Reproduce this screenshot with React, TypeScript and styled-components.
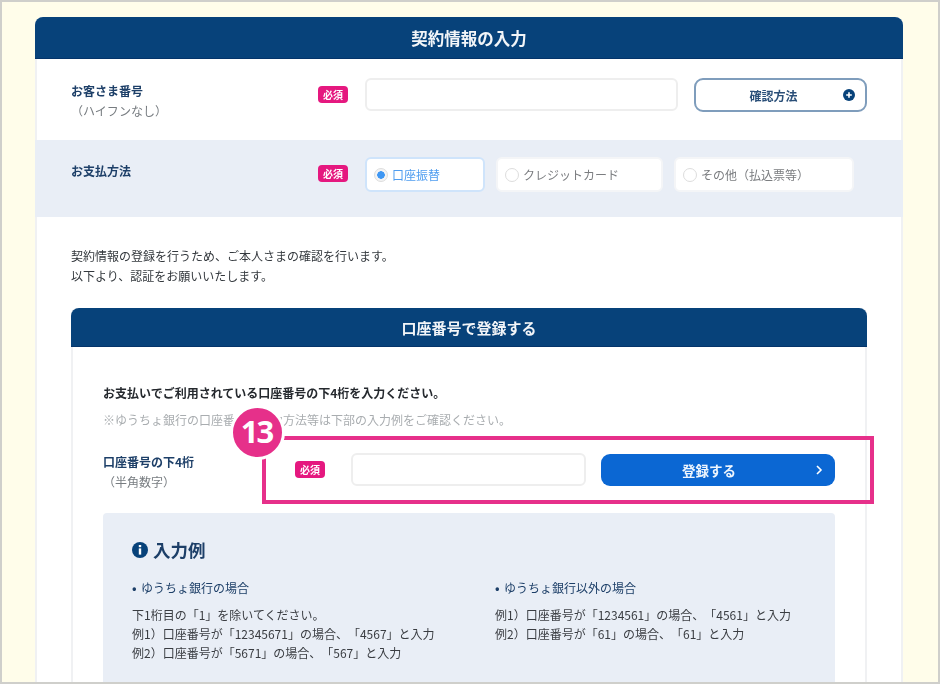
import React from 'react';
import styled, { createGlobalStyle } from 'styled-components';

const GlobalStyle = createGlobalStyle`
  html, body {
    margin: 0;
    padding: 0;
    background: #fffdea;
  }
  body {
    font-family: "Noto Sans CJK JP", "Noto Sans", sans-serif;
    text-spacing-trim: space-all;
  }
`;

const Frame = styled.div`
  position: relative;
  box-sizing: border-box;
  width: 940px;
  height: 684px;
  padding: 15px 35px 0 33px;
  border: 2px solid #cfcfcb;
  background: #fffdea;
  overflow: hidden;
`;

const Card = styled.section`
  background: #fff;
  border-radius: 8px 8px 0 0;
  height: 700px;
  box-shadow: inset 2px 0 0 #f0f1f3, inset -2px 0 0 #f0f1f3;
  filter: blur(0.45px);
`;

const CardHeader = styled.h2<{ $height: number; $size: number }>`
  margin: 0;
  height: ${p => p.$height}px;
  line-height: ${p => p.$height}px;
  background: #07427a;
  border-bottom: 1px solid #04346a;
  box-sizing: border-box;
  border-radius: 8px 8px 0 0;
  color: #f2f5f8;
  font-size: ${p => p.$size}px;
  font-weight: 700;
  text-align: center;
`;

const FormRow = styled.div<{ $height: number; $tinted?: boolean }>`
  box-sizing: border-box;
  height: ${p => p.$height}px;
  display: flex;
  align-items: flex-start;
  padding: ${p => (p.$tinted ? 17 : 19)}px 36px 0;
  background: ${p => (p.$tinted ? '#e9eef6' : 'transparent')};
`;

const LabelBlock = styled.div<{ $width: number; $top: number }>`
  width: ${p => p.$width}px;
  flex: none;
  margin-top: ${p => p.$top}px;
`;

const Label = styled.div`
  color: #1d3f68;
  font-size: 12px;
  font-weight: 700;
  line-height: 20px;
`;

const SubLabel = styled.div`
  color: #777c80;
  font-size: 12px;
  line-height: 20px;
`;

const Badge = styled.span`
  flex: none;
  width: 30px;
  height: 17px;
  margin-top: 8px;
  border-radius: 4px;
  background: #e5187f;
  color: #fff;
  font-size: 10px;
  font-weight: 700;
  line-height: 17px;
  text-align: center;
`;

const TextInput = styled.div<{ $width: number; $gap: number }>`
  box-sizing: border-box;
  flex: none;
  width: ${p => p.$width}px;
  height: 33px;
  margin-left: ${p => p.$gap}px;
  background: #fff;
  border: 2px solid #eeeeee;
  border-radius: 6px;
`;

const OutlineButton = styled.button`
  position: relative;
  box-sizing: border-box;
  flex: none;
  width: 173px;
  height: 34px;
  margin-left: 16px;
  padding: 0 14px 0 0;
  background: #fff;
  border: 2px solid #7f9dbc;
  border-radius: 9px;
  color: #2a4f78;
  font-family: inherit;
  font-size: 12px;
  font-weight: 700;
  svg {
    position: absolute;
    right: 10px;
    top: 9px;
  }
`;

const RadioGroup = styled.div`
  display: flex;
  gap: 11px;
  margin-left: 17px;
`;

const RadioOption = styled.div<{ $width: number; $active?: boolean }>`
  box-sizing: border-box;
  width: ${p => p.$width}px;
  height: 35px;
  display: flex;
  align-items: center;
  gap: 4px;
  padding-left: 7px;
  background: #fff;
  border: 2px solid ${p => (p.$active ? '#cfe4fb' : '#f4f5f7')};
  border-radius: 6px;
  color: ${p => (p.$active ? '#4f9df0' : '#7b7d80')};
  font-size: 12px;
`;

const RadioMark = styled.span<{ $active?: boolean }>`
  box-sizing: border-box;
  width: 14px;
  height: 14px;
  flex: none;
  border-radius: 50%;
  border: 1px solid #dddddd;
  background: ${p => (p.$active ? 'radial-gradient(circle, #3f97f3 0 3.5px, #f4f4f4 4px)' : '#fff')};
`;

const CardBody = styled.div`
  padding: 29px 36px 0;
`;

const Intro = styled.p`
  margin: 0 0 22px;
  color: #33383d;
  font-size: 12px;
  line-height: 20px;
`;

const InnerCard = styled.section`
  border-radius: 6px 6px 0 0;
  box-shadow: inset 2px 0 0 #f0f1f3, inset -2px 0 0 #f0f1f3;
`;

const InnerBody = styled.div`
  padding: 36px 32px 0;
`;

const Lead = styled.p`
  margin: 0;
  color: #25292e;
  font-size: 12px;
  font-weight: 700;
  line-height: 20px;
`;

const Note = styled.p`
  margin: 7px 0 0;
  color: #a9adb0;
  font-size: 12px;
  line-height: 20px;
`;

const AccountRow = styled.div`
  display: flex;
  align-items: flex-start;
  margin-top: 23px;
  height: 60px;
`;

const SubmitButton = styled.button`
  position: relative;
  flex: none;
  width: 234px;
  height: 32px;
  margin: 1px 0 0 15px;
  padding: 0 18px 0 0;
  background: #0b67d3;
  border: none;
  border-radius: 9px;
  color: #eef5fd;
  font-family: inherit;
  font-size: 13.5px;
  font-weight: 700;
  svg {
    position: absolute;
    right: 11px;
    top: 10px;
  }
`;

const ExampleBox = styled.div`
  padding: 24px 29px 0;
  height: 200px;
  background: #e9eef6;
  border-radius: 4px 4px 0 0;
`;

const ExampleTitle = styled.h3`
  display: flex;
  align-items: center;
  gap: 5px;
  margin: 0;
  color: #1d3f68;
  font-size: 17.5px;
  font-weight: 700;
  line-height: 26px;
`;

const ExampleColumns = styled.div`
  display: grid;
  grid-template-columns: 363px 1fr;
  margin-top: 15px;
`;

const ExampleHeading = styled.div`
  color: #1d3f68;
  font-size: 12px;
  line-height: 20px;
  margin-bottom: 7px;
`;

const HeadingBullet = styled.span`
  display: inline-block;
  width: 9px;
  font-weight: 700;
`;

const ExampleLine = styled.div`
  color: #3a3d42;
  font-size: 12px;
  line-height: 19px;
`;

const Callout = styled.div`
  position: absolute;
  left: 260px;
  top: 434px;
  box-sizing: border-box;
  width: 612px;
  height: 68px;
  border: 4px solid #e6308a;
`;

const CalloutNumber = styled.div`
  position: absolute;
  left: 228px;
  top: 403px;
  box-sizing: content-box;
  width: 49px;
  height: 49px;
  border: 3px solid #fff;
  border-radius: 50%;
  background: #e6308a;
  color: #fff;
  font-family: "Open Sans", "Noto Sans", sans-serif;
  font-size: 31px;
  font-weight: 700;
  letter-spacing: -2px;
  line-height: 47px;
  text-align: center;
  text-indent: -2px;
`;

const App = () => {
  return (
    <Frame>
      <GlobalStyle />
      <Card>
        <CardHeader $height={42} $size={16.5}>契約情報の入力</CardHeader>
        <FormRow $height={81}>
          <LabelBlock $width={247} $top={3}>
            <Label>お客さま番号</Label>
            <SubLabel>（ハイフンなし）</SubLabel>
          </LabelBlock>
          <Badge>必須</Badge>
          <TextInput $width={313} $gap={17} />
          <OutlineButton>
            確認方法
            <svg width="12" height="12" viewBox="0 0 12 12">
              <circle cx="6" cy="6" r="6" fill="#07427a" />
              <path d="M6 3.2v5.6M3.2 6h5.6" stroke="#fff" strokeWidth="1.6" />
            </svg>
          </OutlineButton>
        </FormRow>
        <FormRow $height={77} $tinted>
          <LabelBlock $width={247} $top={4}>
            <Label>お支払方法</Label>
          </LabelBlock>
          <Badge>必須</Badge>
          <RadioGroup>
            <RadioOption $width={120} $active>
              <RadioMark $active />
              口座振替
            </RadioOption>
            <RadioOption $width={167}>
              <RadioMark />
              クレジットカード
            </RadioOption>
            <RadioOption $width={180}>
              <RadioMark />
              その他（払込票等）
            </RadioOption>
          </RadioGroup>
        </FormRow>
        <CardBody>
          <Intro>
            契約情報の登録を行うため、ご本人さまの確認を行います。
            <br />
            以下より、認証をお願いいたします。
          </Intro>
          <InnerCard>
            <CardHeader $height={39} $size={15}>口座番号で登録する</CardHeader>
            <InnerBody>
              <Lead>お支払いでご利用されている口座番号の下4桁を入力ください。</Lead>
              <Note>※ゆうちょ銀行の口座番号の入力方法等は下部の入力例をご確認ください。</Note>
              <AccountRow>
                <LabelBlock $width={192} $top={-1}>
                  <Label>口座番号の下4桁</Label>
                  <SubLabel>（半角数字）</SubLabel>
                </LabelBlock>
                <Badge>必須</Badge>
                <TextInput $width={235} $gap={26} />
                <SubmitButton>
                  登録する
                  <svg width="10" height="12" viewBox="0 0 10 12">
                    <path d="M3 2l4 4-4 4" fill="none" stroke="#fff" strokeWidth="1.6" />
                  </svg>
                </SubmitButton>
              </AccountRow>
              <ExampleBox>
                <ExampleTitle>
                  <svg width="16" height="16" viewBox="0 0 16 16">
                    <circle cx="8" cy="8" r="8" fill="#07427a" />
                    <rect x="6.8" y="3" width="2.4" height="2.2" fill="#fff" />
                    <rect x="6.8" y="6.4" width="2.4" height="6.2" fill="#fff" />
                  </svg>
                  入力例
                </ExampleTitle>
                <ExampleColumns>
                  <div>
                    <ExampleHeading><HeadingBullet>•</HeadingBullet>ゆうちょ銀行の場合</ExampleHeading>
                    <ExampleLine>下1桁目の「1」を除いてください。</ExampleLine>
                    <ExampleLine>例1）口座番号が「12345671」の場合、「4567」と入力</ExampleLine>
                    <ExampleLine>例2）口座番号が「5671」の場合、「567」と入力</ExampleLine>
                  </div>
                  <div>
                    <ExampleHeading><HeadingBullet>•</HeadingBullet>ゆうちょ銀行以外の場合</ExampleHeading>
                    <ExampleLine>例1）口座番号が「1234561」の場合、「4561」と入力</ExampleLine>
                    <ExampleLine>例2）口座番号が「61」の場合、「61」と入力</ExampleLine>
                  </div>
                </ExampleColumns>
              </ExampleBox>
            </InnerBody>
          </InnerCard>
        </CardBody>
      </Card>
      <Callout />
      <CalloutNumber>13</CalloutNumber>
    </Frame>
  );
};

export default App;
